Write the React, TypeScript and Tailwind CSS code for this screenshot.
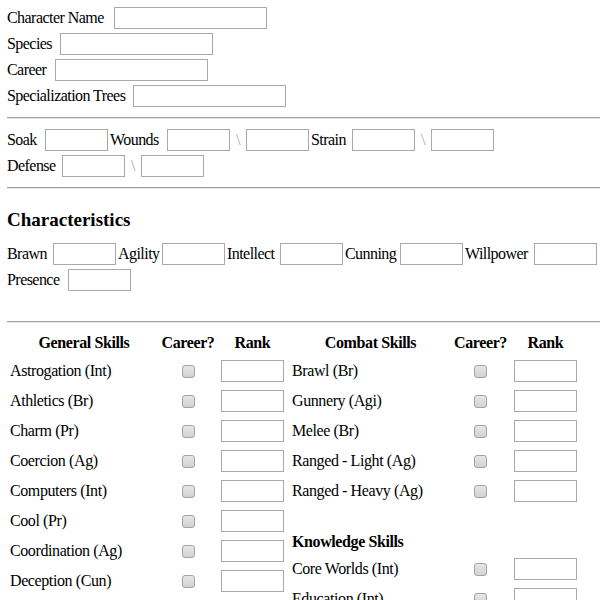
import React from 'react'

const font = "font-['Liberation_Serif','Times_New_Roman',serif]"

function Box({ wide }: { wide?: boolean }) {
  return (
    <input
      type="text"
      className={`h-[22px] shrink-0 border border-[#a9a9a9] bg-white px-1 text-[13px] outline-none ${
        wide ? 'w-[153px]' : 'w-[63px]'
      }`}
    />
  )
}

function Check() {
  return (
    <input
      type="checkbox"
      className="h-[13px] w-[13px] appearance-none rounded-[3px] border border-[#a2a2a2] bg-linear-to-b from-[#e6e6e6] to-[#d2d2d2]"
    />
  )
}

function Rule() {
  return (
    <div className="flex flex-col">
      <div className="h-px bg-[#a0a0a0]" />
      <div className="h-px bg-[#e8e8e8]" />
    </div>
  )
}

// label widths follow the old browser's narrow glyph spacing
function Label({ text, w, first }: { text: string; w: string; first?: boolean }) {
  return (
    <span className={`${first ? '' : 'ml-[2px]'} mr-[6px] shrink-0 whitespace-nowrap tracking-[-0.55px] ${w}`}>
      {text}
    </span>
  )
}

function Slash() {
  return <span className="w-[16px] shrink-0 text-center text-[#9aa9c4]">\</span>
}

const topFields = [
  { label: 'Character Name', w: 'w-[101px]' },
  { label: 'Species', w: 'w-[47px]' },
  { label: 'Career', w: 'w-[42px]' },
  { label: 'Specialization Trees', w: 'w-[120px]' },
]

const general = [
  'Astrogation (Int)',
  'Athletics (Br)',
  'Charm (Pr)',
  'Coercion (Ag)',
  'Computers (Int)',
  'Cool (Pr)',
  'Coordination (Ag)',
  'Deception (Cun)',
]

const combat = ['Brawl (Br)', 'Gunnery (Agi)', 'Melee (Br)', 'Ranged - Light (Ag)', 'Ranged - Heavy (Ag)']
const knowledge = ['Core Worlds (Int)', 'Education (Int)']

function SkillRow({ name, cols }: { name: string; cols: string }) {
  return (
    <div className={`grid h-[30px] items-center ${cols}`}>
      <span className="whitespace-nowrap">{name}</span>
      <div className="flex justify-center">
        <Check />
      </div>
      <div className="flex justify-center">
        <Box />
      </div>
    </div>
  )
}

function HeadRow({ title, cols }: { title: string; cols: string }) {
  return (
    <div className={`grid h-[27px] items-center text-center font-bold ${cols}`}>
      <span>{title}</span>
      <span>Career?</span>
      <span>Rank</span>
    </div>
  )
}

export default function App() {
  const leftCols = 'grid-cols-[148px_60px_69px]'
  const rightCols = 'grid-cols-[157px_63px_67px]'

  return (
    <div className={`h-[600px] w-full overflow-hidden bg-white text-[16px] tracking-[-0.4px] text-black ${font}`}>
      <div className="flex flex-col pl-[7px] pt-[7px]">
        {/* identity */}
        <div className="flex flex-col gap-[4px]">
          {topFields.map((f) => (
            <div key={f.label} className="flex h-[22px] items-center">
              <Label text={f.label} w={f.w} first />
              <Box wide />
            </div>
          ))}
        </div>

        <div className="mt-[10px] mb-[10px]">
          <Rule />
        </div>

        {/* soak / wounds */}
        <div className="flex flex-col gap-[4px]">
          <div className="flex h-[22px] items-center">
            <Label text="Soak" w="w-[32px]" first />
            <Box />
            <Label text="Wounds" w="w-[51px]" />
            <Box />
            <Slash />
            <Box />
            <Label text="Strain" w="w-[35px]" />
            <Box />
            <Slash />
            <Box />
          </div>
          <div className="flex h-[22px] items-center">
            <Label text="Defense" w="w-[49px]" first />
            <Box />
            <Slash />
            <Box />
          </div>
        </div>

        <div className="mt-[10px]">
          <Rule />
        </div>

        {/* characteristics */}
        <h3 className="mt-[20px] h-[22px] text-[19px] font-bold leading-[22px] tracking-normal">Characteristics</h3>
        <div className="mt-[12px] flex flex-col gap-[4px]">
          <div className="flex h-[22px] items-center">
            <Label text="Brawn" w="w-[40px]" first />
            <Box />
            <Label text="Agility" w="w-[38px]" />
            <Box />
            <Label text="Intellect" w="w-[47px]" />
            <Box />
            <Label text="Cunning" w="w-[49px]" />
            <Box />
            <Label text="Willpower" w="w-[63px]" />
            <Box />
          </div>
          <div className="flex h-[22px] items-center">
            <Label text="Presence" w="w-[55px]" first />
            <Box />
          </div>
        </div>

        <div className="mt-[30px]">
          <Rule />
        </div>

        {/* skills */}
        <div className="ml-[3px] mt-[6px] flex items-start">
          <div className="flex flex-col">
            <HeadRow title="General Skills" cols={leftCols} />
            {general.map((s) => (
              <SkillRow key={s} name={s} cols={leftCols} />
            ))}
          </div>
          <div className="ml-[5px] flex flex-col">
            <HeadRow title="Combat Skills" cols={rightCols} />
            {combat.map((s) => (
              <SkillRow key={s} name={s} cols={rightCols} />
            ))}
            <div className="h-[24px]" />
            <div className="flex h-[24px] items-center font-bold">Knowledge Skills</div>
            {knowledge.map((s) => (
              <SkillRow key={s} name={s} cols={rightCols} />
            ))}
          </div>
        </div>
      </div>
    </div>
  )
}
